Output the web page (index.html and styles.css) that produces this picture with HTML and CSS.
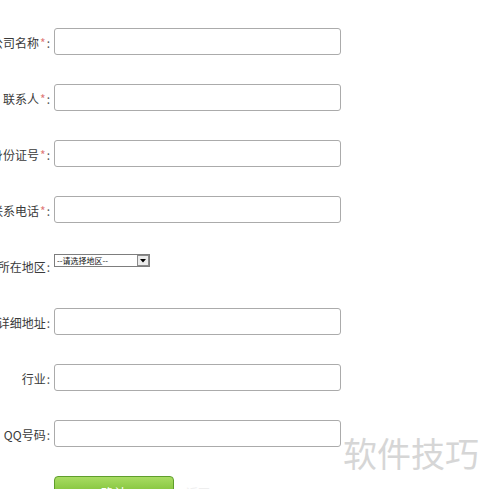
FILE: index.html
```html
<!DOCTYPE html>
<html lang="zh-CN">
<head>
<meta charset="utf-8">
<title>注册</title>
<link rel="stylesheet" href="styles.css">
</head>
<body>
<form class="form">
  <div class="row"><label class="lbl">公司名称<span class="req">*</span><span class="colon">:</span></label><input class="txt" type="text"></div>
  <div class="row"><label class="lbl">联系人<span class="req">*</span><span class="colon">:</span></label><input class="txt" type="text"></div>
  <div class="row"><label class="lbl">身份证号<span class="req">*</span><span class="colon">:</span></label><input class="txt" type="text"></div>
  <div class="row"><label class="lbl">联系电话<span class="req">*</span><span class="colon">:</span></label><input class="txt" type="text"></div>
  <div class="row"><label class="lbl">所在地区<span class="colon">:</span></label>
    <span class="sel-wrap">
      <select class="sel"><option>--请选择地区--</option></select>
      <svg class="sel-arrow" width="12" height="11" viewBox="0 0 12 11"><rect x="0.5" y="0.5" width="11" height="10" fill="#ececec" stroke="#8a8a8a"/><path d="M3 4h6l-3 3.5z" fill="#000"/></svg>
    </span>
  </div>
  <div class="row"><label class="lbl">详细地址<span class="colon">:</span></label><input class="txt" type="text"></div>
  <div class="row"><label class="lbl">行业<span class="colon">:</span></label><input class="txt" type="text"></div>
  <div class="row"><label class="lbl">QQ号码<span class="colon">:</span></label><input class="txt" type="text"></div>
  <div class="actions"><button class="btn" type="button">确认</button><span class="back">返回</span></div>
</form>
<div class="watermark">软件技巧</div>
</body>
</html>
```
FILE: styles.css
```css
html, body {
  margin: 0;
  padding: 0;
  background: #fff;
}
body {
  font-family: "Noto Sans CJK SC", "Microsoft YaHei", sans-serif;
  font-size: 12px;
  color: #3a3a3a;
  overflow: hidden;
  height: 489px;
}
.form {
  padding-top: 28px;
  margin-left: -46px;
}
.row {
  display: flex;
  align-items: flex-start;
  margin-bottom: 27px;
}
.lbl {
  width: 96px;
  flex: none;
  text-align: right;
  line-height: 29px;
  padding-right: 4px;
  white-space: nowrap;
}
.req {
  color: #e07a7a;
  margin-left: 1px;
}
.colon {
  margin-left: 1px;
  color: #555;
}
.txt {
  box-sizing: border-box;
  width: 287px;
  height: 27px;
  border: 1px solid #ababab;
  border-radius: 3px;
  background: #fff;
  margin: 0;
  padding: 0 4px;
}
.sel-wrap {
  position: relative;
  display: inline-block;
  margin-top: 2px;
}
.sel {
  box-sizing: border-box;
  appearance: none;
  -webkit-appearance: none;
  width: 96px;
  height: 13px;
  border: 1px solid #7d7d7d;
  border-radius: 0;
  background: #fff;
  font-family: "Noto Sans CJK SC", sans-serif;
  font-size: 8px;
  line-height: 11px;
  padding: 0 0 0 2px;
  margin: 0;
  color: #111;
  display: block;
}
.sel-arrow {
  position: absolute;
  right: 1px;
  top: 1px;
}
.actions {
  display: flex;
  align-items: flex-start;
  margin-left: 100px;
}
.btn {
  box-sizing: border-box;
  width: 120px;
  height: 30px;
  border: 1px solid #5f9e2c;
  border-radius: 4px;
  background: linear-gradient(#a8dc62, #86c63f 50%, #6fb52b);
  color: #fff;
  font-family: "Noto Sans CJK SC", sans-serif;
  font-size: 13px;
  padding: 4px 0 0;
  line-height: 14px;
  margin: 0;
}
.back {
  margin-left: 12px;
  margin-top: 8px;
  color: #eee;
  font-size: 12px;
}
.watermark {
  position: absolute;
  left: 341px;
  top: 431px;
  font-family: "Noto Sans CJK SC", sans-serif;
  font-size: 34px;
  line-height: 44px;
  color: #d6d6d6;
  background: #fff;
  padding: 0 0 0 2px;
}
```
